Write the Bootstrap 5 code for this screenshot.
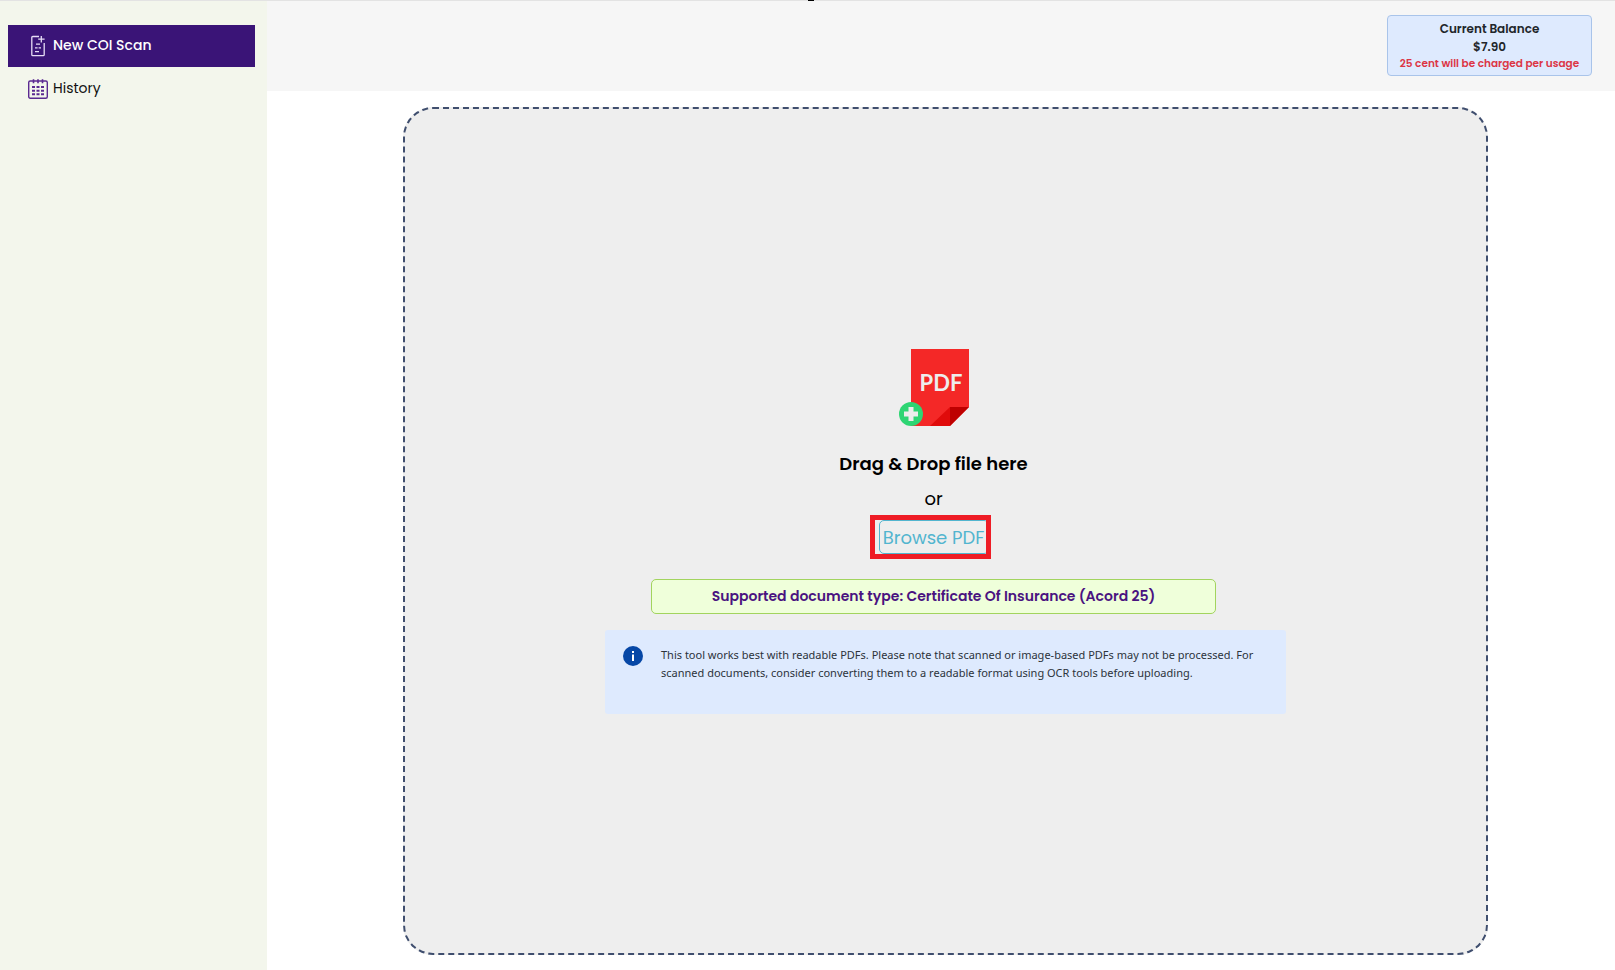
<!DOCTYPE html>
<html lang="en">
<head>
<meta charset="utf-8">
<meta name="viewport" content="width=device-width, initial-scale=1">
<title>New COI Scan</title>
<link href="https://cdn.jsdelivr.net/npm/bootstrap@5.3.0/dist/css/bootstrap.min.css" rel="stylesheet">
<style>
  body { font-family: Poppins, Inter, sans-serif; color: #212529; }
  .app-shell { border-top: 1px solid #e3e3e3; }
  .top-notch { left: 50%; top: -1px; width: 6px; height: 1px; background: #000; }
  .side-menu { flex: 0 0 267px; background: #f3f6ec; padding: 24px 12px 0 8px; }
  .side-menu .nav-link { height: 42px; padding: 0 0 0 20px; font-size: 14px; line-height: 21px; color: #111; border-radius: 0; }
  .side-menu .nav-link.active { background: #3a1477; color: #fff; font-weight: 500; padding-bottom: 1px; }
  .menu-icon { width: 20px; height: 22px; margin-right: 5px; }
  .top-strip { background: #f6f6f6; padding: 14px 23px 15px; }
  .balance-box { width: 205px; background: #deeafe; border: 1px solid #a9c4ea; border-radius: 4px; padding: 4px 0 3px; font-size: 12px; line-height: 18px; font-weight: 600; }
  .balance-note { line-height: 16px; color: #dc3545; }
  .drop-wrap { padding: 16px 127px 15px 136px; }
  .drop-zone { background: #eee; border: 2px dashed #3f4e6e; border-radius: 30px; }
  .drop-main { padding-right: 24px; color: #000; font-size: 18px; line-height: 27px; }
  .drop-title { font-size: 18px; line-height: 27px; font-weight: 600; margin: 24px 0 8px; }
  .browse-btn { width: 110px; height: 34px; padding: 2px 0 0; font-size: 18px; line-height: 27px; color: #52b5cf; border: 1px solid #52b5cf; border-radius: 5px; }
  .browse-btn:hover { color: #fff; background: #52b5cf; }
  .browse-frame { inset: -5px -2px -5px -9px; border: 5px solid #ee1c25; pointer-events: none; }
  .type-box { width: 565px; max-width: 100%; margin: 25px 0 16px; padding: 6px; background: #efffda; border: 1px solid #a2d45e; border-radius: 5px; color: #4a1380; font-size: 14px; line-height: 21px; font-weight: 600; }
  .info-box { width: 681px; max-width: 100%; min-height: 84px; padding: 16px 10px 16px 18px; gap: 18px; background: #deeafe; border-radius: 3px; }
  .info-text { font-family: "Noto Sans", sans-serif; font-size: 11px; line-height: 18px; color: #2c333b; }
</style>
</head>
<body>
<div class="app-shell d-flex min-vh-100 position-relative">
  <span class="top-notch position-absolute"></span>
  <nav class="side-menu" aria-label="Main">
    <ul class="nav nav-pills flex-column">
      <li class="nav-item">
        <a class="nav-link active d-flex align-items-center" aria-current="page" href="#scan">
          <svg class="menu-icon" viewBox="0 0 20 22" fill="none" stroke="#e6dcf5" stroke-width="1.3" aria-hidden="true">
            <path d="M11 1.5H4.8a1 1 0 0 0-1 1v17.2a1 1 0 0 0 1 1h10.4a1 1 0 0 0 1-1V8M13.3 1v6.4M10.2 4.2h6.4"/>
            <path d="M8 9.2h4M7 12.9h2.6M10.6 12.9H13M7 16.6h4"/>
          </svg>
          <span>New COI Scan</span>
        </a>
      </li>
      <li class="nav-item">
        <a class="nav-link d-flex align-items-center" href="#history">
          <svg class="menu-icon" viewBox="0 0 20 22" fill="none" stroke="#5b2a91" aria-hidden="true">
            <rect x=".7" y="4" width="18.6" height="17.3" rx="1.5" stroke-width="1.4"/>
            <path d="M5.5 2.2v4M10 2.2v4M14.5 2.2v4" stroke-width="1.6"/>
            <path d="M4 10h3M8.5 10h3M13 10h3M4 13.7h3M8.5 13.7h3M13 13.7h3M4 17.3h3M8.5 17.3h3M13 17.3h3" stroke-width="2"/>
          </svg>
          <span>History</span>
        </a>
      </li>
    </ul>
  </nav>
  <div class="flex-grow-1 d-flex flex-column">
    <header class="top-strip d-flex justify-content-end">
      <div class="balance-box text-center">
        <div>Current Balance</div>
        <div>$7.90</div>
        <div class="balance-note small">25 cent will be charged per usage</div>
      </div>
    </header>
    <main class="drop-wrap flex-grow-1 d-flex">
      <section class="drop-zone flex-grow-1 d-flex flex-column align-items-center justify-content-center">
        <div class="drop-main d-flex flex-column align-items-center text-center">
          <svg width="70" height="77" viewBox="0 0 70 77" role="img" aria-label="Add PDF">
            <path d="M12 0h58v58L51 77H12z" fill="#f42827"/>
            <path d="M51 58v19H31z" fill="#e00b0b"/>
            <path d="M51 58h19L51 77z" fill="#be0000"/>
            <text x="42" y="42" text-anchor="middle" font-family="Lato, sans-serif" font-weight="700" font-size="22" fill="#ededed">PDF</text>
            <circle cx="12" cy="65" r="12" fill="#2ed573"/>
            <path d="M12 58v14M5 65h14" stroke="#ededed" stroke-width="5"/>
          </svg>
          <h1 class="drop-title">Drag &amp; Drop file here</h1>
          <div class="mb-2">or</div>
          <div class="position-relative d-flex">
            <button type="button" class="btn browse-btn">Browse PDF</button>
            <span class="browse-frame position-absolute"></span>
          </div>
          <div class="type-box">Supported document type: Certificate Of Insurance (Acord 25)</div>
        </div>
        <div class="info-box d-flex align-items-start">
          <svg class="flex-shrink-0" width="20" height="20" viewBox="0 0 20 20" aria-hidden="true">
            <circle cx="10" cy="10" r="10" fill="#0647a6"/>
            <path d="M9 5h2v2H9zM9 8.5h2V15H9z" fill="#fff"/>
          </svg>
          <div class="info-text">This tool works best with readable PDFs. Please note that scanned or image-based PDFs may not be processed. For scanned documents, consider converting them to a readable format using OCR tools before uploading.</div>
        </div>
      </section>
    </main>
  </div>
</div>
</body>
</html>
